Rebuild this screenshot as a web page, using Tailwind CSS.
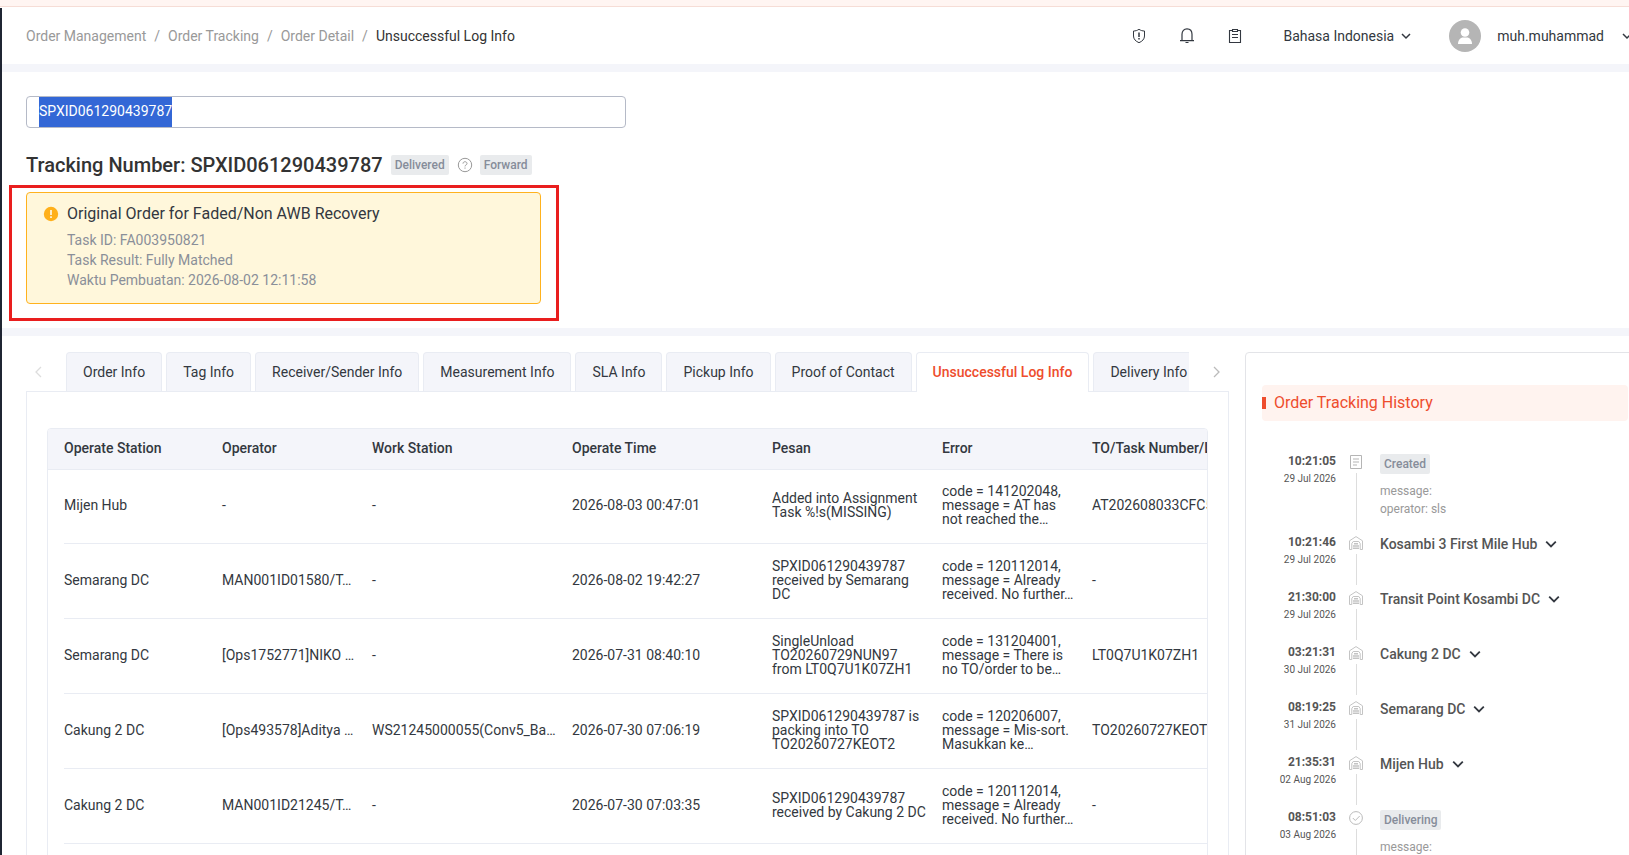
<!DOCTYPE html>
<html lang="id">
<head>
    <meta charset="UTF-8">
    <meta name="viewport" content="width=device-width, initial-scale=1.0">
    <title>Unsuccessful Log Info</title>
    <script src="https://cdn.jsdelivr.net/npm/@tailwindcss/browser@4"></script>
</head>
<body class="h-screen overflow-hidden flex flex-col bg-white font-[Roboto,sans-serif] text-sm text-[#333840]">
    <!-- Icons shared by several items -->
    <svg class="hidden">
        <symbol id="chevron" viewBox="0 0 10 10"><path d="M1 3l4 4 4-4" fill="none" stroke="currentColor" stroke-width="1.5"/></symbol>
        <symbol id="warehouse" viewBox="0 0 14 14">
            <path d="M.5 13.5V4.8L7 .6l6.5 4.2v8.700h-2.300V7.500L9.800 5.500H4.200L2.800 7.500v6z" fill="none" stroke="currentColor" stroke-linejoin="round"/>
            <path d="M5 7.800h4M4 10h6M4 12.300h6" stroke="currentColor" stroke-width="1.400"/>
        </symbol>
    </svg>

    <div class="h-[7px] shrink-0 bg-[#fff5f2] border-b border-[#f6ddd6]"></div>

    <div class="flex-1 min-h-0 mt-px border-l-2 border-[#1f2532]">
        <header class="h-14 pl-6 flex items-center justify-between">
            <nav aria-label="Breadcrumb" class="flex items-center gap-2 text-[#999]">
                <a href="#">Order Management</a><span>/</span>
                <a href="#">Order Tracking</a><span>/</span>
                <a href="#">Order Detail</a><span>/</span>
                <span class="text-[#333]">Unsuccessful Log Info</span>
            </nav>
            <div class="flex items-center -mr-[3px]">
                <div class="flex items-center gap-8 mr-10">
                    <button aria-label="Security" class="size-4">
                        <svg class="size-4" viewBox="0 0 16 16" fill="none" stroke="currentColor"><path d="M8 1.300c1.800 1.200 3.500 1.700 5.500 1.700v5c0 3.100-2.200 5.300-5.500 6.700C4.700 13.300 2.500 11.100 2.500 8V3C4.500 3 6.200 2.500 8 1.300z"/><path d="M8 4.600v4.400M8 10v1.400" stroke-width="1.500"/></svg>
                    </button>
                    <button aria-label="Notifications" class="size-4">
                        <svg class="size-4" viewBox="0 0 16 16" fill="none" stroke="currentColor" stroke-width="1.2"><path d="M1 12.700h14M3 12.500V6.200C3 3 5 .8 8 .8s5 2.200 5 5.400v6.300M6.500 14.500h3"/></svg>
                    </button>
                    <button aria-label="Tasks" class="size-4">
                        <svg class="size-4" viewBox="0 0 16 16" fill="none" stroke="currentColor" stroke-width="1.1"><path d="M5 2.500H2.500v12h11v-12H11M5.500 1.500h5v2h-5zM5 6.500h6M5 9.500h6"/></svg>
                    </button>
                </div>
                <button class="flex items-center gap-[7px] mr-[38px]">Bahasa Indonesia
                    <svg class="size-[10px]"><use href="#chevron"/></svg>
                </button>
                <button class="flex items-center">
                    <svg class="size-8 mr-4" viewBox="0 0 32 32"><circle cx="16" cy="16" r="16" fill="#b5b5b5"/><circle cx="16" cy="12.500" r="4.300" fill="#fff"/><path d="M9 24c0-4 2.500-6.500 5-6.500h4c2.500 0 5 2.500 5 6.500z" fill="#fff"/></svg>
                    muh.muhammad
                    <svg class="size-[10px] ml-[18px]"><use href="#chevron"/></svg>
                </button>
            </div>
        </header>

        <section class="relative border-y-8 border-[#f4f5fa] pt-6 pb-6 px-6">
            <!-- The number is drawn selected, over the full height of the box -->
            <input aria-label="Tracking number" type="text" value="SPXID061290439787" class="block w-[600px] h-8 px-3 pb-0.5 border border-[#b5bac7] rounded outline-none text-white bg-[linear-gradient(#3367d6,#3367d6)] bg-no-repeat bg-[position:12px_0] bg-size-[133px_100%]">
            <div class="flex items-center mt-[25px] h-6">
                <h1 class="text-xl font-medium text-[#333]">Tracking Number: SPXID061290439787</h1>
                <span class="ml-2 px-1 h-5 leading-5 rounded-xs bg-[#e9ebed] text-xs font-medium text-[#868d9a]">Delivered</span>
                <button aria-label="Status help" class="ml-2 mr-[7px]">
                    <svg class="size-4" viewBox="0 0 16 16" fill="none" stroke="#999"><circle cx="8" cy="8" r="6.700"/><path d="M6 6.600c0-2.500 4-2.500 4 0C10 8 8 7.900 8 9.400M8 10.500v1.200"/></svg>
                </button>
                <span class="px-1 h-5 leading-5 rounded-xs bg-[#e9ebed] text-xs font-medium text-[#868d9a]">Forward</span>
            </div>
            <div class="mt-[15px] w-[515px] h-28 pt-2 pl-4 flex border border-[#ffb21e] rounded bg-[#fff7db]">
                <svg class="size-4 mt-[5px] mr-2" viewBox="0 0 16 16"><circle cx="8" cy="8" r="7.200" fill="#ffb01a"/><path d="M8 4v5M8 10.300v1.700" stroke="#fff" stroke-width="1.500"/></svg>
                <div>
                    <h2 class="text-base leading-[26px]">Original Order for Faded/Non AWB Recovery</h2>
                    <div class="mt-[3px] leading-5 text-[#8a8f99]">
                        <p>Task ID: FA003950821</p>
                        <p>Task Result: Fully Matched</p>
                        <p>Waktu Pembuatan: 2026-08-02 12:11:58</p>
                    </div>
                </div>
            </div>
            <!-- Red highlight around the notice -->
            <div class="absolute left-[7px] top-[113px] w-[550px] h-[136px] border-3 border-[#e91e1e] pointer-events-none"></div>
        </section>

        <div class="flex gap-4 pt-4 pl-6 -mr-4">
            <main class="flex-1 min-w-0">
                <div class="flex h-[39px]">
                    <button aria-label="Previous tabs" class="w-10 shrink-0 pl-2 text-[#ddd]">
                        <svg class="h-3 w-2" viewBox="0 0 8 12" fill="none" stroke="currentColor" stroke-width="1.300"><path d="M7 1L2 6l5 5"/></svg>
                    </button>
                    <div role="tablist" class="relative z-10 flex-1 min-w-0 flex gap-1 h-10 overflow-hidden whitespace-nowrap *:shrink-0 *:h-[39px] *:px-4 *:rounded-t *:border *:border-b-0 *:border-[#e9ecf3] *:bg-[#f4f5fa]">
                        <button role="tab">Order Info</button>
                        <button role="tab">Tag Info</button>
                        <button role="tab">Receiver/Sender Info</button>
                        <button role="tab">Measurement Info</button>
                        <button role="tab">SLA Info</button>
                        <button role="tab">Pickup Info</button>
                        <button role="tab">Proof of Contact</button>
                        <button role="tab" aria-selected="true" class="h-10! pb-px bg-white! font-medium text-[#ee4d2d]">Unsuccessful Log Info</button>
                        <button role="tab">Delivery Info</button>
                    </div>
                    <button aria-label="Next tabs" class="w-10 shrink-0 pl-6 text-[#bbb]">
                        <svg class="h-3 w-2" viewBox="0 0 8 12" fill="none" stroke="currentColor" stroke-width="1.300"><path d="M1 1l5 5-5 5"/></svg>
                    </button>
                </div>
                <div class="h-screen border border-[#e9ecf3] px-5 pt-9">
                    <div class="h-full overflow-hidden border border-[#e9ecf3] rounded-t">
                        <table class="table-fixed w-[1244px] text-left">
                            <colgroup>
                                <col class="w-[174px]"><col class="w-[150px]"><col class="w-[200px]"><col class="w-[200px]"><col class="w-[170px]"><col class="w-[150px]"><col class="w-[200px]">
                            </colgroup>
                            <thead class="bg-[#f4f5fa] border-b border-[#e9ecf3]">
                                <tr class="h-10 *:pb-px *:font-medium *:whitespace-nowrap">
                                    <th class="pl-4">Operate Station</th>
                                    <th>Operator</th>
                                    <th>Work Station</th>
                                    <th>Operate Time</th>
                                    <th>Pesan</th>
                                    <th>Error</th>
                                    <th>TO/Task Number/LT Number</th>
                                </tr>
                            </thead>
                            <tbody class="leading-[14px] **:[td]:pb-1 *:h-[75px] *:bg-[linear-gradient(#e9ecf3,#e9ecf3)] *:bg-no-repeat *:bg-[position:16px_100%] *:bg-size-[100%_1px]">
                                <tr>
                                    <td class="pl-4">Mijen Hub</td>
                                    <td>-</td>
                                    <td>-</td>
                                    <td>2026-08-03 00:47:01</td>
                                    <td class="pr-4">Added into Assignment Task %!s(MISSING)</td>
                                    <td class="pr-4">code = 141202048, message = AT has not reached the…</td>
                                    <td>AT202608033CFC5</td>
                                </tr>
                                <tr>
                                    <td class="pl-4">Semarang DC</td>
                                    <td>MAN001ID01580/T…</td>
                                    <td>-</td>
                                    <td>2026-08-02 19:42:27</td>
                                    <td class="pr-4">SPXID061290439787 received by Semarang DC</td>
                                    <td class="pr-4">code = 120112014, message = Already received. No further…</td>
                                    <td>-</td>
                                </tr>
                                <tr>
                                    <td class="pl-4">Semarang DC</td>
                                    <td>[Ops1752771]NIKO …</td>
                                    <td>-</td>
                                    <td>2026-07-31 08:40:10</td>
                                    <td class="pr-4">SingleUnload TO20260729NUN97 from LT0Q7U1K07ZH1</td>
                                    <td class="pr-4">code = 131204001, message = There is no TO/order to be…</td>
                                    <td>LT0Q7U1K07ZH1</td>
                                </tr>
                                <tr>
                                    <td class="pl-4">Cakung 2 DC</td>
                                    <td>[Ops493578]Aditya …</td>
                                    <td>WS21245000055(Conv5_Ba…</td>
                                    <td>2026-07-30 07:06:19</td>
                                    <td class="pr-4">SPXID061290439787 is packing into TO TO20260727KEOT2</td>
                                    <td class="pr-4">code = 120206007, message = Mis-sort. Masukkan ke…</td>
                                    <td>TO20260727KEOT2</td>
                                </tr>
                                <tr>
                                    <td class="pl-4">Cakung 2 DC</td>
                                    <td>MAN001ID21245/T…</td>
                                    <td>-</td>
                                    <td>2026-07-30 07:03:35</td>
                                    <td>SPXID061290439787 received by Cakung 2 DC</td>
                                    <td class="pr-4">code = 120112014, message = Already received. No further…</td>
                                    <td>-</td>
                                </tr>
                            </tbody>
                        </table>
                    </div>
                </div>
            </main>

            <aside class="w-[400px] shrink-0 h-screen border border-[#e3e4e8] rounded-t px-4 pt-8">
                <h2 class="flex items-center gap-2 h-9 rounded bg-[#fff3ef] text-base text-[#ee4d2d]"><span class="w-1 h-3 bg-[#ee4d2d]"></span>Order Tracking History</h2>
                <ol class="mt-8 text-[#555]">
                    <li class="flex h-[81px]">
                        <div class="w-[74px] text-right">
                            <p class="text-xs leading-4 font-bold">10:21:05</p>
                            <p class="mt-0.5 text-[10px] leading-4">29 Jul 2026</p>
                        </div>
                        <div class="w-[14px] ml-[13px] mr-[17px] pt-0.5 flex flex-col items-center">
                            <svg class="size-[14px] text-[#b5b5b5]" viewBox="0 0 14 14" fill="none" stroke="currentColor"><path d="M1.500.5h11v13h-11zM4 4h6M4 7h6M4 10h4"/></svg>
                            <span class="flex-1 w-px mt-1 mb-1 bg-[#ddd]"></span>
                        </div>
                        <div>
                            <span class="inline-block px-1 h-5 leading-5 rounded-xs bg-[#e9ebed] text-xs font-medium text-[#868d9a]">Created</span>
                            <p class="mt-2 text-xs leading-[18px] text-[#999]">message:<br>operator: sls</p>
                        </div>
                    </li>
                    <li class="flex h-[55px]">
                        <div class="w-[74px] text-right">
                            <p class="text-xs leading-4 font-bold">10:21:46</p>
                            <p class="mt-0.5 text-[10px] leading-4">29 Jul 2026</p>
                        </div>
                        <div class="w-[14px] ml-[13px] mr-[17px] pt-0.5 flex flex-col items-center">
                            <svg class="size-[14px] text-[#c4c4c4]"><use href="#warehouse"/></svg>
                            <span class="flex-1 w-px mt-1 mb-1 bg-[#ddd]"></span>
                        </div>
                        <button class="flex items-center gap-2 h-5 font-medium">Kosambi 3 First Mile Hub <svg class="size-3 text-[#333840]"><use href="#chevron"/></svg></button>
                    </li>
                    <li class="flex h-[55px]">
                        <div class="w-[74px] text-right">
                            <p class="text-xs leading-4 font-bold">21:30:00</p>
                            <p class="mt-0.5 text-[10px] leading-4">29 Jul 2026</p>
                        </div>
                        <div class="w-[14px] ml-[13px] mr-[17px] pt-0.5 flex flex-col items-center">
                            <svg class="size-[14px] text-[#c4c4c4]"><use href="#warehouse"/></svg>
                            <span class="flex-1 w-px mt-1 mb-1 bg-[#ddd]"></span>
                        </div>
                        <button class="flex items-center gap-2 h-5 font-medium">Transit Point Kosambi DC <svg class="size-3 text-[#333840]"><use href="#chevron"/></svg></button>
                    </li>
                    <li class="flex h-[55px]">
                        <div class="w-[74px] text-right">
                            <p class="text-xs leading-4 font-bold">03:21:31</p>
                            <p class="mt-0.5 text-[10px] leading-4">30 Jul 2026</p>
                        </div>
                        <div class="w-[14px] ml-[13px] mr-[17px] pt-0.5 flex flex-col items-center">
                            <svg class="size-[14px] text-[#c4c4c4]"><use href="#warehouse"/></svg>
                            <span class="flex-1 w-px mt-1 mb-1 bg-[#ddd]"></span>
                        </div>
                        <button class="flex items-center gap-2 h-5 font-medium">Cakung 2 DC <svg class="size-3 text-[#333840]"><use href="#chevron"/></svg></button>
                    </li>
                    <li class="flex h-[55px]">
                        <div class="w-[74px] text-right">
                            <p class="text-xs leading-4 font-bold">08:19:25</p>
                            <p class="mt-0.5 text-[10px] leading-4">31 Jul 2026</p>
                        </div>
                        <div class="w-[14px] ml-[13px] mr-[17px] pt-0.5 flex flex-col items-center">
                            <svg class="size-[14px] text-[#c4c4c4]"><use href="#warehouse"/></svg>
                            <span class="flex-1 w-px mt-1 mb-1 bg-[#ddd]"></span>
                        </div>
                        <button class="flex items-center gap-2 h-5 font-medium">Semarang DC <svg class="size-3 text-[#333840]"><use href="#chevron"/></svg></button>
                    </li>
                    <li class="flex h-[55px]">
                        <div class="w-[74px] text-right">
                            <p class="text-xs leading-4 font-bold">21:35:31</p>
                            <p class="mt-0.5 text-[10px] leading-4">02 Aug 2026</p>
                        </div>
                        <div class="w-[14px] ml-[13px] mr-[17px] pt-0.5 flex flex-col items-center">
                            <svg class="size-[14px] text-[#c4c4c4]"><use href="#warehouse"/></svg>
                            <span class="flex-1 w-px mt-1 mb-1 bg-[#ddd]"></span>
                        </div>
                        <button class="flex items-center gap-2 h-5 font-medium">Mijen Hub <svg class="size-3 text-[#333840]"><use href="#chevron"/></svg></button>
                    </li>
                    <li class="flex h-[81px]">
                        <div class="w-[74px] text-right">
                            <p class="text-xs leading-4 font-bold">08:51:03</p>
                            <p class="mt-0.5 text-[10px] leading-4">03 Aug 2026</p>
                        </div>
                        <div class="w-[14px] ml-[13px] mr-[17px] pt-0.5 flex flex-col items-center">
                            <svg class="size-[14px] text-[#bbb]" viewBox="0 0 14 14" fill="none" stroke="currentColor"><circle cx="7" cy="7" r="6.400"/><path d="M3.800 7l2.500 2.500L10.700 5"/></svg>
                            <span class="flex-1 w-px mt-1 mb-1 bg-[#ddd]"></span>
                        </div>
                        <div>
                            <span class="inline-block px-1 h-5 leading-5 rounded-xs bg-[#e9ebed] text-xs font-medium text-[#868d9a]">Delivering</span>
                            <p class="mt-2 text-xs leading-[18px] text-[#999]">message:</p>
                        </div>
                    </li>
                </ol>
            </aside>
        </div>
    </div>
</body>
</html>
